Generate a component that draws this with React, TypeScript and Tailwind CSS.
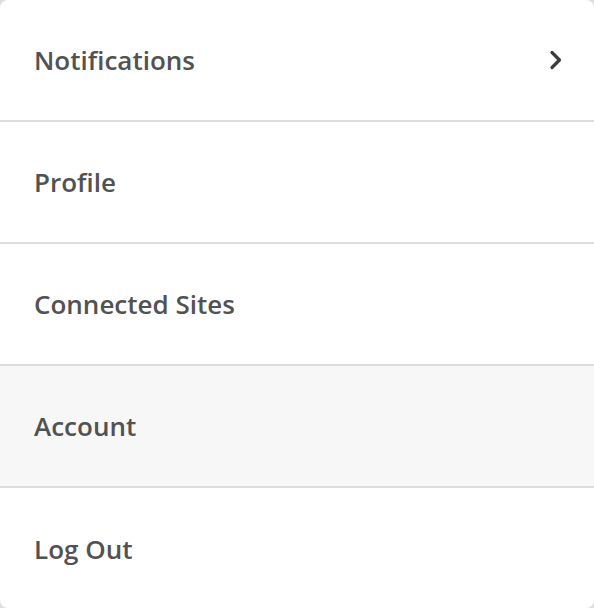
const items = [
  { label: "Notifications", chevron: true },
  { label: "Profile" },
  { label: "Connected Sites" },
  { label: "Account", active: true },
  { label: "Log Out" },
]

function Chevron() {
  return (
    <svg width="14" height="20" viewBox="0 0 14 20" fill="none" className="text-[#3d3d3d]">
      <polyline
        points="3,2.5 10.5,10 3,17.5"
        stroke="currentColor"
        strokeWidth="3.2"
        strokeLinecap="round"
        strokeLinejoin="round"
      />
    </svg>
  )
}

export default function App() {
  return (
    <div className="h-[608px] w-[594px] bg-[#dedede]">
      <div
        className="h-full w-full overflow-hidden rounded-lg bg-white"
        style={{ fontFamily: '"Open Sans", sans-serif' }}
      >
        {items.map((item, i) => (
          <div
            key={item.label}
            className={`flex h-[122px] items-center justify-between pl-[34px] pr-[31px] text-[26px] font-semibold text-[#525252] ${
              i < items.length - 1 ? "border-b-2 border-[#dcdcdc]" : ""
            } ${item.active ? "bg-[#f7f7f7]" : ""}`}
          >
            <span>{item.label}</span>
            {item.chevron && <Chevron />}
          </div>
        ))}
      </div>
    </div>
  )
}
